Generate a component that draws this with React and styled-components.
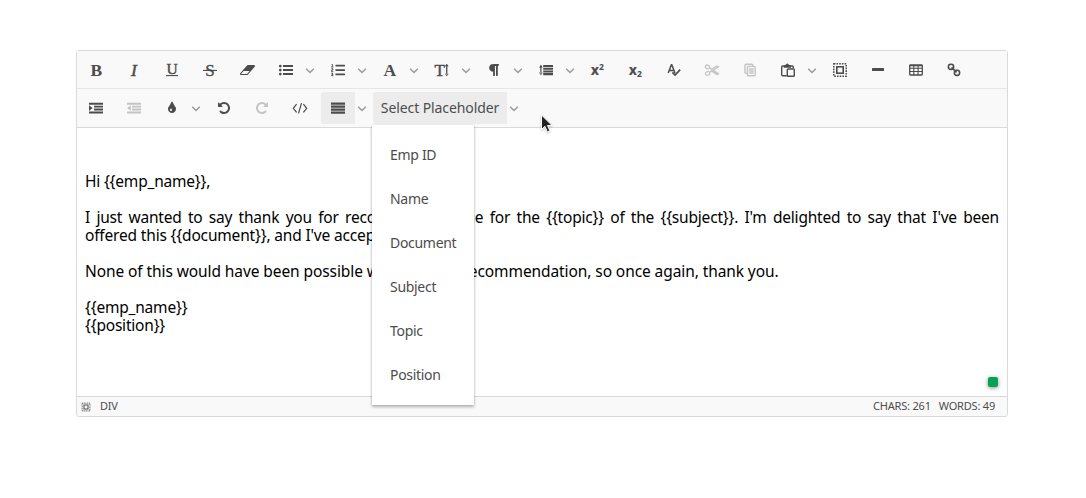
import React from 'react';
import styled, { createGlobalStyle, css } from 'styled-components';
import { FaListOl } from 'react-icons/fa';

const INK = '#4c4c4c';

const GlobalStyle = createGlobalStyle`
  * { box-sizing: border-box; }
  body {
    margin: 0;
    background: #fff;
    font-family: "Noto Sans", "Open Sans", sans-serif;
  }
`;

const Page = styled.main`
  position: relative;
  width: 1086px;
  height: 498px;
  padding: 50px 78px 0 76px;
`;

const Editor = styled.section`
  position: relative;
  display: flex;
  flex-direction: column;
  height: 367px;
  border: 1px solid #dadada;
  border-radius: 3px;
  background: #fff;
`;

const ToolbarRow = styled.div`
  display: flex;
  align-items: center;
  gap: 4px;
  height: ${(p) => (p.$last ? 39 : 38)}px;
  padding-left: 2px;
  padding-bottom: ${(p) => (p.$last ? 1 : 0)}px;
  background: #f9f9f9;
  border-bottom: 1px solid ${(p) => (p.$last ? '#dadada' : '#e6e6e6')};
`;

const ToolGroup = styled.div`
  display: flex;
  align-items: center;
`;

const ToolButton = styled.button`
  display: flex;
  align-items: center;
  justify-content: center;
  width: ${(p) => p.$width || 34}px;
  height: 32px;
  padding: 0;
  border: 0;
  border-radius: 3px 0 0 3px;
  background: ${(p) => (p.$active ? '#ececec' : 'transparent')};
  color: ${INK};
  font: inherit;
  font-size: 14px;
  letter-spacing: ${(p) => p.$tracking || 0}px;
  white-space: nowrap;
`;

const Glyph = styled.svg`
  display: block;
  width: 20px;
  height: 20px;
  overflow: visible;
  opacity: ${(p) => (p.$disabled ? 0.3 : 1)};
`;

const ArrowButton = styled.span`
  display: flex;
  align-items: center;
  justify-content: center;
  width: 14px;
  height: 32px;
`;

const Content = styled.article`
  flex: 1;
  padding: 44px 8px 0;
  color: #000;
  font-size: 15.5px;
  line-height: 18px;
`;

const Line = styled.div`
  height: 18px;
  white-space: nowrap;
  letter-spacing: ${(p) => p.$tracking ?? -0.2}px;
  ${(p) =>
    p.$justify &&
    css`
      white-space: normal;
      text-align: justify;
      text-align-last: justify;
    `}
`;

const StatusBar = styled.footer`
  display: flex;
  align-items: center;
  height: 20px;
  padding: 0 12px 0 4px;
  border-top: 1px solid #dadada;
  border-radius: 0 0 3px 3px;
  background: #f9f9f9;
  color: ${INK};
  font-size: 11px;
  letter-spacing: -0.2px;
`;

const StatusPath = styled.span`
  flex: 1;
  padding: 0 0 2px 9px;
`;

const StatusCount = styled.span`
  padding: 0 0 2px 8px;
`;

const Menu = styled.ul`
  position: absolute;
  top: 74px;
  left: 295px;
  width: 102px;
  margin: 0;
  padding: 8px 0;
  list-style: none;
  background: #fff;
  box-shadow: 0 2px 3px rgba(0, 0, 0, 0.28), 0 0 2px rgba(0, 0, 0, 0.14);
`;

const MenuItem = styled.li`
  display: flex;
  align-items: center;
  height: 44px;
  padding: 0 0 2px 18px;
  color: ${INK};
  font-size: 14px;
  letter-spacing: -0.3px;
  white-space: nowrap;
`;

const AssistantBadge = styled.span`
  position: absolute;
  right: 9px;
  bottom: 29px;
  width: 10px;
  height: 10px;
  border-radius: 2px;
  background: #04a255;
  box-shadow: 0 1px 4px rgba(0, 0, 0, 0.45);
`;

const Pointer = styled.svg`
  position: absolute;
  left: 540px;
  top: 114px;
  width: 14px;
  height: 22px;
  filter: drop-shadow(0 1px 1px rgba(0, 0, 0, 0.25));
`;

const serif = { fontFamily: '"Liberation Serif", serif', fontWeight: 700, textAnchor: 'middle' };
const sans = { fontFamily: '"Open Sans", sans-serif', fontWeight: 700 };

const UNDO =
  'M1664 896q0 156-61 298t-164 245-245 164-298 61q-172 0-327-72.5t-264-204.5q-7-10-6.5-22.5t8.5-20.5l137-138q10-9 25-9 16 2 23 12 73 95 179 147t225 52q104 0 198.5-40.5t163.5-109.5 109.5-163.5 40.5-198.5-40.5-198.5-109.5-163.5-163.5-109.5-198.5-40.5q-98 0-188 35.5t-160 101.5l137 138q31 30 14 69-17 40-59 40h-448q-26 0-45-19t-19-45v-448q0-42 40-59 39-17 69 14l130 129q107-101 244.5-156.5t284.5-55.5q156 0 298 61t245 164 164 245 61 298z';

const selectAll = (
  <>
    <rect x="-6.2" y="-6.2" width="12.4" height="12.4" fill="none" stroke={INK} strokeWidth="1.5" strokeDasharray="1.6 1.1" />
    <rect x="-3.2" y="-3.2" width="6.4" height="6.4" fill="none" stroke={INK} strokeWidth="1.6" />
  </>
);

const icons = {
  bold: <text {...serif} x="0.3" y="6" fontSize="17.5">B</text>,
  italic: <text {...serif} x="0" y="6" fontSize="17.5" fontStyle="italic" fontWeight="400" stroke={INK} strokeWidth="0.45">I</text>,
  underline: (
    <>
      <text {...serif} x="0" y="4.2" fontSize="15.5" fontWeight="400" stroke={INK} strokeWidth="0.4">U</text>
      <path d="M-6 5h12v1.1h-12z" />
    </>
  ),
  strike: (
    <>
      <text {...serif} x="0" y="5.8" fontSize="17" fontWeight="400" stroke={INK} strokeWidth="0.35">S</text>
      <path d="M-7-.1h14v1.1h-14z" />
    </>
  ),
  eraser: (
    <path
      transform="translate(-7.5 -7) scale(.0078)"
      d="M832 1408l336-384h-768l-336 384h768zm1013-1077q15 34 9.5 71.5t-30.5 65.5l-896 1024q-38 44-96 44h-768q-38 0-69.5-20.5t-47.5-54.5q-15-34-9.5-71.5t30.5-65.5l896-1024q38-44 96-44h768q38 0 69.5 20.5t47.5 54.5z"
    />
  ),
  bullets: (
    <>
      <path d="M-3-4.9H7v2H-3zM-3-.9H7v2H-3zM-3 3.1H7v2H-3z" />
      <circle cx="-5.7" cy="-3.9" r="1.4" />
      <circle cx="-5.7" cy="0.1" r="1.4" />
      <circle cx="-5.7" cy="4.1" r="1.4" />
    </>
  ),
  numbers: <FaListOl x="-7" y="-7" size={14} color={INK} />,
  font: <text {...serif} x="-0.2" y="6" fontSize="17.5">A</text>,
  size: (
    <>
      <text {...serif} x="-2.3" y="6" fontSize="17" fontWeight="400" stroke={INK} strokeWidth="0.45">T</text>
      <path d="M4.1-4.5h1.3v9H4.1zM2.8-3.8L4.75-6.2 6.7-3.8zM2.8 3.8L4.75 6.2 6.7 3.8z" />
    </>
  ),
  paragraph: (
    <path
      transform="translate(-7 -7) scale(.0078125)"
      d="M1534 189v73q0 29-18.5 61t-42.5 32q-50 0-54 1-26 6-32 31-3 11-3 64v1152q0 25-18 43t-43 18h-108q-25 0-43-18t-18-43v-1218h-143v1218q0 25-17.5 43t-43.5 18h-108q-26 0-43.5-18t-17.5-43v-496q-147-12-245-59-126-58-192-179-64-117-64-259 0-166 88-286 88-118 209-159 111-37 417-37h479q25 0 43 18t18 43z"
    />
  ),
  lineHeight: (
    <>
      <path d="M-2.8-5H7v2.1H-2.8zM-2.8-2.3H7v2.1H-2.8zM-2.8.4H7v2.1H-2.8zM-2.8 3.1H7v2.1H-2.8z" />
      <path d="M-5.7-3.5h1.2v7h-1.2zM-7-2.6L-5.1-5.2-3.2-2.6zM-7 2.6L-5.1 5.2-3.2 2.6z" />
    </>
  ),
  superscript: (
    <>
      <text {...sans} x="-7" y="5.4" fontSize="13.5" stroke={INK} strokeWidth="0.2">x</text>
      <text {...sans} x="1.1" y="-0.1" fontSize="8.6">2</text>
    </>
  ),
  subscript: (
    <>
      <text {...sans} x="-7" y="5.4" fontSize="13.5" stroke={INK} strokeWidth="0.2">x</text>
      <text {...sans} x="1.1" y="7.2" fontSize="8.6">2</text>
    </>
  ),
  spellcheck: (
    <>
      <path d="M-5.8 3L-2.6-5.2h.4L1 3M-4.6.4H0" fill="none" stroke={INK} strokeWidth="1.5" />
      <path d="M-1.6 2.3L1.1 5 6.2-.3" fill="none" stroke={INK} strokeWidth="1.7" />
    </>
  ),
  cut: (
    <g fill="none" stroke={INK} strokeWidth="1.3">
      <ellipse cx="-4.4" cy="-3" rx="2.2" ry="1.8" transform="rotate(25 -4.4 -3)" />
      <ellipse cx="-4.4" cy="3.4" rx="2.2" ry="1.8" transform="rotate(-25 -4.4 3.4)" />
      <path d="M-2.6-2.2L6.4 3.6 5 4.4-.6.9-2.6 2.6M-.6-.6L5-4.1l1.4.8L.8.5" />
    </g>
  ),
  copy: (
    <g fill="none" stroke={INK} strokeWidth="1.4">
      <path d="M-2.6 3.4H-3.8Q-5 3.4-5 2.2V-4.6Q-5-5.8-3.8-5.8H1.6Q2.8-5.8 2.8-4.6V-3.7" />
      <rect x="-2.5" y="-3.6" width="7.7" height="9.3" rx="1" />
      <path d="M-.8-1h4.4M-.8 1h4.4M-.8 3h4.4" strokeWidth="1.4" />
    </g>
  ),
  paste: (
    <>
      <path d="M-1.2 5.8H-5.2Q-6.3 5.8-6.3 4.7V-2.9Q-6.3-4-5.2-4H4.2Q5.3-4 5.3-2.9V-1.6" fill="none" stroke={INK} strokeWidth="1.4" />
      <path d="M-4.2-2.2v-2l2.2-1.4Q-.6-7.6.6-5.6l2.4 1.4v2z" />
      <rect x="-.7" y="-1" width="7" height="7.2" rx=".8" fill="#f9f9f9" stroke={INK} strokeWidth="1.4" />
    </>
  ),
  selectAll,
  hr: <rect x="-6" y="-1.9" width="12" height="3" rx=".6" />,
  table: (
    <>
      <rect x="-6.3" y="-5.2" width="12.6" height="10.2" rx=".8" fill="none" stroke={INK} strokeWidth="1.3" />
      <path d="M-6-4.4H6M-6-1.8H6M-6 1.5H6M-2.2-5V5M2.1-5V5" fill="none" stroke={INK} strokeWidth="1.1" />
    </>
  ),
  link: (
    <g fill="none" stroke={INK} strokeWidth="1.6">
      <rect x="-5.6" y="-5.8" width="5.2" height="5.2" rx="2.3" />
      <rect x=".4" y=".2" width="5.2" height="5.2" rx="2.3" />
      <path d="M-2.4-2.6l5 5" strokeWidth="1.5" />
    </g>
  ),
  indent: (
    <path d="M-7-5.2H7v1.9H-7zM-2-2.3H7v1.9H-2zM-2 .6H7v1.9H-2zM-7 3.5H7v1.9H-7zM-7-2.7L-3.4.1-7 2.9z" />
  ),
  outdent: (
    <path d="M-7-5.2H7v1.9H-7zM-2-2.3H7v1.9H-2zM-2 .6H7v1.9H-2zM-7 3.5H7v1.9H-7zM-3.2-2.7L-6.8.1-3.2 2.9z" />
  ),
  drop: (
    <path
      transform="translate(-7 -7) scale(.0078125)"
      d="M896 1152q0-36-20-69-1-1-15.5-22.5t-25.5-38-25-44-21-50.5q-4-16-21-16t-21 16q-7 23-21 50.5t-25 44-25.5 38-15.5 22.5q-20 33-20 69 0 53 37.5 90.5t90.5 37.5 90.5-37.5 37.5-90.5zm512-128q0 212-150 362t-362 150-362-150-150-362q0-145 81-275 6-9 62.5-90.5t101-151 99.5-178 83-201.5q9-30 34-47t51-17 51.5 17 33.5 47q28 93 83 201.5t99.5 178 101 151 62.5 90.5q81 127 81 275z"
    />
  ),
  undo: <path transform="translate(-7 -7) scale(.0078125)" d={UNDO} />,
  redo: <path transform="translate(7 -7) scale(-.0078125 .0078125)" d={UNDO} />,
  code: <path d="M-3.4-3.8L-6.7.3-3.4 4.4M3.4-3.8L6.7.3 3.4 4.4M1.5-4.8L-1.5 5.4" fill="none" stroke={INK} strokeWidth="1.2" />,
  justify: <path d="M-7-5.4H7v2.2H-7zM-7-2.4H7v2.2H-7zM-7 .6H7v2.2H-7zM-7 3.6H7v2.2H-7z" />,
};

const Icon = ({ name, disabled }) => (
  <Glyph viewBox="-10 -10 20 20" fill={INK} $disabled={disabled} aria-hidden="true">
    {icons[name]}
  </Glyph>
);

const Arrow = () => (
  <ArrowButton>
    <svg width="10" height="8" viewBox="0 0 10 8" fill="none" stroke="#999" strokeWidth="1.4">
      <path d="M1.2 2.8L5 6.6 8.8 2.8" />
    </svg>
  </ArrowButton>
);

const Tool = ({ name, arrow, disabled, active }) => (
  <ToolGroup>
    <ToolButton $active={active} aria-label={name}>
      <Icon name={name} disabled={disabled} />
    </ToolButton>
    {arrow && <Arrow />}
  </ToolGroup>
);

const firstRow = [
  { name: 'bold' },
  { name: 'italic' },
  { name: 'underline' },
  { name: 'strike' },
  { name: 'eraser' },
  { name: 'bullets', arrow: true },
  { name: 'numbers', arrow: true },
  { name: 'font', arrow: true },
  { name: 'size', arrow: true },
  { name: 'paragraph', arrow: true },
  { name: 'lineHeight', arrow: true },
  { name: 'superscript' },
  { name: 'subscript' },
  { name: 'spellcheck' },
  { name: 'cut', disabled: true },
  { name: 'copy', disabled: true },
  { name: 'paste', arrow: true },
  { name: 'selectAll' },
  { name: 'hr' },
  { name: 'table' },
  { name: 'link' },
];

const secondRow = [
  { name: 'indent' },
  { name: 'outdent', disabled: true },
  { name: 'drop', arrow: true },
  { name: 'undo' },
  { name: 'redo', disabled: true },
  { name: 'code' },
  { name: 'justify', arrow: true, active: true },
];

const placeholders = ['Emp ID', 'Name', 'Document', 'Subject', 'Topic', 'Position'];

export default function App() {
  return (
    <Page>
      <GlobalStyle />
      <Editor>
        <ToolbarRow>
          {firstRow.map((tool) => (
            <Tool key={tool.name} {...tool} />
          ))}
        </ToolbarRow>
        <ToolbarRow $last>
          {secondRow.map((tool) => (
            <Tool key={tool.name} {...tool} />
          ))}
          <ToolGroup>
            <ToolButton $active $width={134} $tracking={-0.1}>Select Placeholder</ToolButton>
            <Arrow />
          </ToolGroup>
        </ToolbarRow>
        <Content>
          <Line>{'Hi {{emp_name}},'}</Line>
          <Line />
          <Line $justify>
            {"I just wanted to say thank you for recommending me for the {{topic}} of the {{subject}}. I'm delighted to say that I've been"}
          </Line>
          <Line $tracking={-0.17}>{"offered this {{document}}, and I've accepted."}</Line>
          <Line />
          <Line $tracking={-0.09}>None of this would have been possible without your recommendation, so once again, thank you.</Line>
          <Line />
          <Line>{'{{emp_name}}'}</Line>
          <Line>{'{{position}}'}</Line>
        </Content>
        <StatusBar>
          <svg width="10" height="10" viewBox="-8 -8 16 16" aria-hidden="true">{selectAll}</svg>
          <StatusPath>DIV</StatusPath>
          <StatusCount>CHARS: 261</StatusCount>
          <StatusCount>WORDS: 49</StatusCount>
        </StatusBar>
        <AssistantBadge />
        <Menu>
          {placeholders.map((label) => (
            <MenuItem key={label}>{label}</MenuItem>
          ))}
        </Menu>
      </Editor>
      <Pointer viewBox="0 0 14 22" aria-hidden="true">
        <path d="M1.5 1v14.5l3.4-3.2 2.4 5.6 2.6-1.1-2.4-5.3h4.6z" fill="#222" stroke="#fff" strokeWidth="1" />
      </Pointer>
    </Page>
  );
}
